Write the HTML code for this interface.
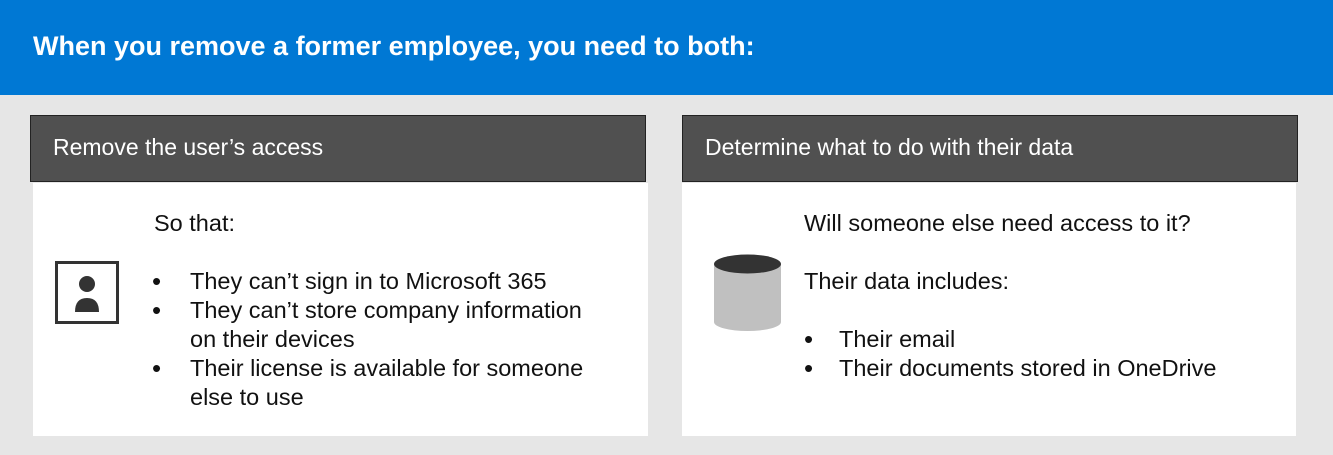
<!DOCTYPE html>
<html><head><style>
body{margin:0;width:1333px;height:455px;background:#e6e6e6;font-family:"Liberation Sans",sans-serif;position:relative;overflow:hidden}
.top{position:absolute;left:0;top:0;width:1333px;height:95px;background:#0078d4}
.top div{position:absolute;left:33px;top:31px;color:#fff;font-size:27px;font-weight:bold;white-space:nowrap}
.hd{position:absolute;top:115px;height:67px;background:#505050;border:1px solid #222;color:#fff;font-size:23px;box-sizing:border-box;padding:18px 0 0 22px;white-space:nowrap}
.bd{position:absolute;top:183px;height:253px;background:#fff}
.t{position:absolute;font-size:23.5px;color:#111;line-height:29px;white-space:nowrap}
.b{position:absolute;font-size:23.5px;color:#111;line-height:29px}
.b span{position:absolute;left:-38px;font-size:26px}
</style></head><body>
<div class="top"><div>When you remove a former employee, you need to both:</div></div>
<div class="hd" style="left:30px;width:616px">Remove the user’s access</div>
<div class="bd" style="left:33px;width:615px"></div>
<div class="hd" style="left:682px;width:616px">Determine what to do with their data</div>
<div class="bd" style="left:682px;width:614px"></div>
<svg style="position:absolute;left:0;top:0" width="1333" height="455">
<rect x="56.5" y="262.5" width="61" height="60" fill="none" stroke="#333" stroke-width="3"/>
<circle cx="87" cy="284" r="8" fill="#333"/>
<path d="M75 312 Q75 298 87 298 Q99 298 99 312 Z" fill="#333"/>
<path d="M714 264 V322 A33.5 9 0 0 0 781 322 V264 Z" fill="#c0c0c0"/>
<ellipse cx="747.5" cy="264" rx="33.5" ry="9.5" fill="#333"/>
</svg>
<div class="t" style="left:154px;top:209px">So that:</div>
<div class="b" style="left:190px;top:267px;width:418px">
<div style="position:relative"><span>•</span>They can’t sign in to Microsoft 365</div>
<div style="position:relative"><span>•</span>They can’t store company information on their devices</div>
<div style="position:relative"><span>•</span>Their license is available for someone else to use</div>
</div>
<div class="t" style="left:804px;top:209px">Will someone else need access to it?</div>
<div class="t" style="left:804px;top:267px">Their data includes:</div>
<div class="b" style="left:839px;top:325px;width:440px">
<div style="position:relative"><span style="left:-35px">•</span>Their email</div>
<div style="position:relative"><span style="left:-35px">•</span>Their documents stored in OneDrive</div>
</div>
</body></html>
